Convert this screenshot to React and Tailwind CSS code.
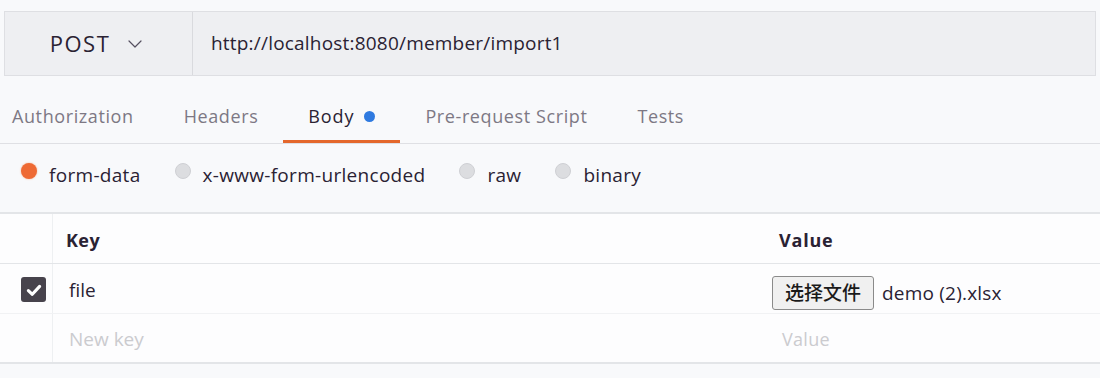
import { ChevronDown } from 'lucide-react'

const font = { fontFamily: '"Open Sans", "Noto Sans CJK SC", sans-serif' }

function Radio({ label, active }) {
  return (
    <div className="flex items-center">
      <span
        className={`w-[16px] h-[16px] rounded-full -mt-[8px] ${
          active ? 'bg-[#ee6a34] shadow-[0_0_2px_#f6b08c]' : 'bg-[#dcdde0] border border-[#cfd0d4]'
        }`}
      />
      <span className="ml-[12px] text-[19px] tracking-[0.3px] text-[#2a2233]">{label}</span>
    </div>
  )
}

function Tab({ label, active, first }) {
  return (
    <div
      className={`relative h-full flex items-center pt-[14px] ${first ? 'pl-[12px] pr-[25px]' : 'px-[25px]'} ${
        active ? 'text-[#2a2233]' : 'text-[#7d7884]'
      }`}
    >
      <span className={`text-[18px] ${active ? 'tracking-[0.9px]' : 'tracking-[0.6px]'}`}>{label}</span>
      {active && <span className="ml-[10px] w-[11px] h-[11px] rounded-full bg-[#2f7ae0]" />}
      {active && <span className="absolute left-0 right-0 bottom-0 h-[3px] bg-[#e4672c]" />}
    </div>
  )
}

export default function App() {
  return (
    <div className="w-[1100px] h-[378px] overflow-hidden bg-[#f8f9fb]" style={font}>
      <div className="pt-[11px] px-[4px]">
        <div className="flex h-[65px] bg-[#eeeff2] border border-[#dedfe3]">
          <div className="w-[188px] flex items-center justify-center gap-[13px] border-r border-[#d9dade]">
            <span className="text-[22px] text-[#2a2233] tracking-[1.5px]">POST</span>
            <ChevronDown size={24} strokeWidth={1.2} className="text-[#555060]" />
          </div>
          <div className="flex items-center pl-[18px] text-[19px] tracking-[0.2px] text-[#2a2233]">
            http://localhost:8080/member/import1
          </div>
        </div>
      </div>

      <div className="flex h-[68px] border-b border-[#dfe0e4]">
        <Tab label="Authorization" first />
        <Tab label="Headers" />
        <Tab label="Body" active />
        <Tab label="Pre-request Script" />
        <Tab label="Tests" />
      </div>

      <div className="flex items-center h-[68px] pl-[21px] pb-[6px] gap-[34px]">
        <Radio label="form-data" active />
        <Radio label="x-www-form-urlencoded" />
        <Radio label="raw" />
        <Radio label="binary" />
      </div>

      <div className="bg-[#fdfdfe] border-t-2 border-b-2 border-[#e3e5e8]">
        <div className="flex h-[50px] pt-[4px] border-b border-[#e3e5e8]">
          <div className="w-[53px] border-r border-[#eef0f2] -mt-[4px]" />
          <div className="w-[713px] flex items-center pl-[13px] text-[18px] font-bold tracking-[0.4px] text-[#2a2233]">Key</div>
          <div className="flex-1 flex items-center pl-[13px] text-[18px] font-bold tracking-[0.8px] text-[#2a2233]">Value</div>
        </div>
        <div className="flex h-[50px] border-b border-[#f1f2f4]">
          <div className="w-[53px] border-r border-[#eef0f2] flex items-center pl-[21px] pt-[2px]">
            <span className="w-[25px] h-[25px] rounded-[3px] bg-[#47434c] flex items-center justify-center">
              <svg width="18" height="18" viewBox="0 0 16 16">
                <path d="M3 8.5 L6.5 11.8 L13 4.8" fill="none" stroke="#fff" strokeWidth="2.8" strokeLinecap="round" strokeLinejoin="round" />
              </svg>
            </span>
          </div>
          <div className="w-[713px] flex items-center pl-[16px] pt-[3px] text-[19px] text-[#2a2233]">file</div>
          <div className="flex-1 flex items-center pl-[6px] pt-[9px]">
            <span className="h-[34px] px-[12px] flex items-center border border-[#8a8a8a] rounded-[3px] bg-[#f0f0f0] text-[19px] font-medium text-[#1a1a1a]">
              选择文件
            </span>
            <span className="ml-[8px] text-[19px] tracking-[0.2px] text-[#2a2233]">demo (2).xlsx</span>
          </div>
        </div>
        <div className="flex h-[48px]">
          <div className="w-[53px] border-r border-[#eef0f2]" />
          <div className="w-[713px] flex items-center pl-[16px] pt-[3px] text-[19px] text-[#cbcbcf]">New key</div>
          <div className="flex-1 flex items-center pl-[16px] pt-[3px] text-[18px] tracking-[0.3px] text-[#cbcbcf]">Value</div>
        </div>
      </div>
    </div>
  )
}
